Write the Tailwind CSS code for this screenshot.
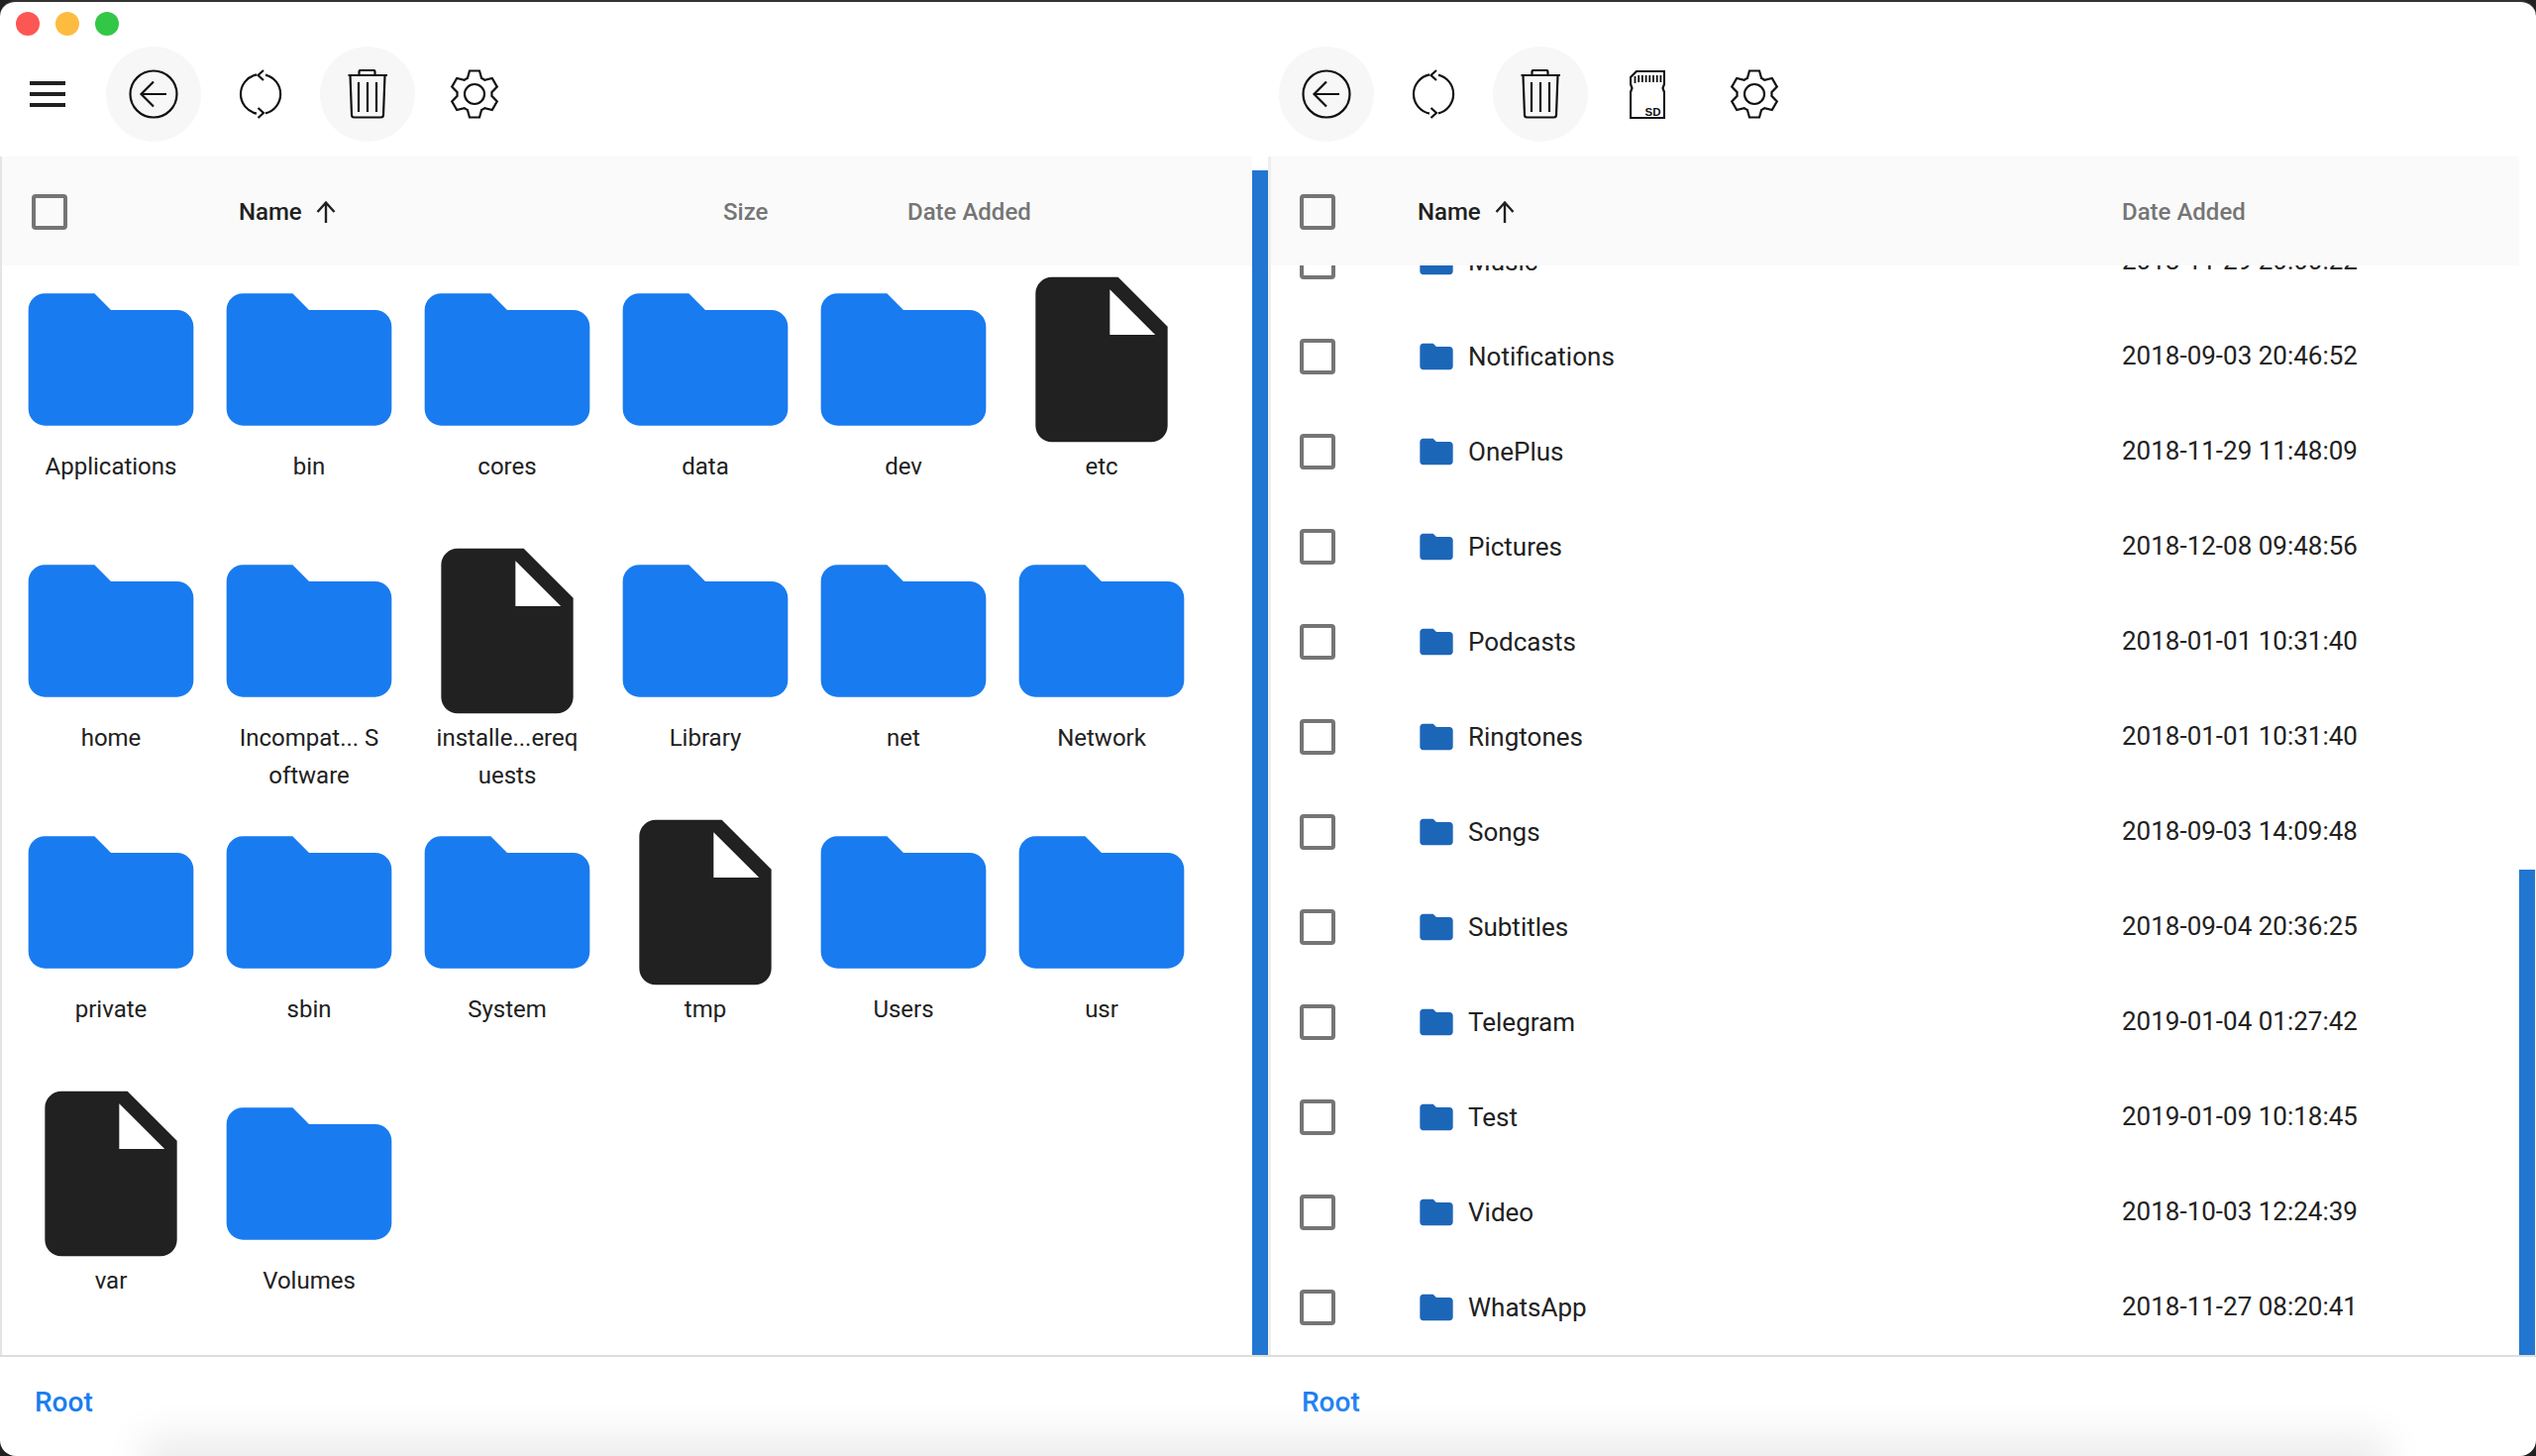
<!DOCTYPE html>
<html lang="en">
<head>
  <meta charset="UTF-8" />
  <title>File Explorer</title>
  <script src="https://cdn.jsdelivr.net/npm/@tailwindcss/browser@4"></script>
</head>
<body class="h-[1470px] overflow-hidden bg-[#222222] font-['Roboto',sans-serif] text-[#212121]">
  <svg class="hidden">
    <symbol id="folder" viewBox="0 0 24 24"><path fill="currentColor" d="M10 4H4c-1.1 0-2 .9-2 2v12c0 1.1.9 2 2 2h16c1.1 0 2-.9 2-2V8c0-1.1-.9-2-2-2h-8l-2-2z"/></symbol>
    <symbol id="file" viewBox="0 0 24 24"><path fill="currentColor" d="M6 2c-1.1 0-2 .9-2 2v16c0 1.1.9 2 2 2h12c1.1 0 2-.9 2-2V8l-6-6H6zm7 7V3.500L18.500 9H13z"/></symbol>
    <symbol id="up" viewBox="-12 -12 24 24"><path fill="none" stroke="currentColor" stroke-width="2.400" d="M0 11V-9M-8.500 0L0 -9.500L8.500 0"/></symbol>
    <symbol id="back" viewBox="-25 -25 50 50"><g fill="none" stroke="#111" stroke-width="2.200"><circle r="23.500"/><path d="M13 0H-12.500M0 -12.500L-12.500 0L0 12.500"/></g></symbol>
    <symbol id="refresh" viewBox="-25 -25 50 50"><g fill="none" stroke="#111" stroke-width="2.200"><path d="M-4 -19.600A20 20 0 0 0 -4 19.600M5 -19.400A20 20 0 0 1 5 19.400M3 -24L-2.500 -19L3 -14M-2.500 24L3 19L-2.500 14"/></g></symbol>
    <symbol id="trash" viewBox="-25 -25 50 50"><g fill="none" stroke="#111" stroke-width="2.200"><path d="M-19.500 -19H20M-8.500 -19V-22.500Q-8.500 -24 -7 -24H6Q7.500 -24 7.500 -22.500V-19M-17.500 -19L-16 21Q-16 23.500 -13.500 23.500H13.500Q16 23.500 16 21L17.500 -19M-9 -12V18M0 -12V18M9 -12V18"/></g></symbol>
    <symbol id="gear" viewBox="-25 -25 50 50"><g fill="none" stroke="#111" stroke-width="2.200"><circle r="10"/><path d="M-7.100 -16L-5 -23.500H5L7.100 -16A17.500 17.500 0 0 1 10.300 -14.200L17.800 -16.100L22.800 -7.400L17.400 -1.800A17.500 17.500 0 0 1 17.400 1.800L22.800 7.400L17.800 16.100L10.300 14.200A17.500 17.500 0 0 1 7.100 16L5 23.500H-5L-7.100 16A17.500 17.500 0 0 1 -10.300 14.200L-17.800 16.100L-22.800 7.400L-17.400 1.800A17.500 17.500 0 0 1 -17.400 -1.800L-22.800 -7.400L-17.800 -16.100L-10.300 -14.200A17.500 17.500 0 0 1 -7.100 -16Z"/></g></symbol>
  </svg>

  <div class="relative w-[2560px] h-[1470px] bg-white overflow-hidden rounded-[16px] border-t-2 border-[#333333]">
    <!-- window buttons -->
    <div class="flex gap-4 pl-4 pt-[10px] h-[44px]">
      <div class="w-6 h-6 rounded-full bg-[#fc5753]"></div>
      <div class="w-6 h-6 rounded-full bg-[#fdbc40]"></div>
      <div class="w-6 h-6 rounded-full bg-[#33c748]"></div>
    </div>

    <!-- toolbars -->
    <div class="flex h-[112px] pt-px">
      <div class="flex w-[1281px] pl-[30px]">
        <div class="flex flex-col justify-center gap-[7px] w-9 h-24 mr-[41px]">
          <div class="h-1 bg-[#212121]"></div>
          <div class="h-1 bg-[#212121]"></div>
          <div class="h-1 bg-[#212121]"></div>
        </div>
        <div class="flex gap-3">
          <div class="flex items-center justify-center w-24 h-24 rounded-full bg-[#f7f7f7]"><svg class="w-[50px] h-[50px]"><use href="#back"/></svg></div>
          <div class="flex items-center justify-center w-24 h-24 rounded-full"><svg class="w-[50px] h-[50px]"><use href="#refresh"/></svg></div>
          <div class="flex items-center justify-center w-24 h-24 rounded-full bg-[#f7f7f7]"><svg class="w-[50px] h-[50px]"><use href="#trash"/></svg></div>
          <div class="flex items-center justify-center w-24 h-24 rounded-full"><svg class="w-[50px] h-[50px]"><use href="#gear"/></svg></div>
        </div>
      </div>
      <div class="flex gap-3 pl-[10px]">
        <div class="flex items-center justify-center w-24 h-24 rounded-full bg-[#f7f7f7]"><svg class="w-[50px] h-[50px]"><use href="#back"/></svg></div>
        <div class="flex items-center justify-center w-24 h-24 rounded-full"><svg class="w-[50px] h-[50px]"><use href="#refresh"/></svg></div>
        <div class="flex items-center justify-center w-24 h-24 rounded-full bg-[#f7f7f7]"><svg class="w-[50px] h-[50px]"><use href="#trash"/></svg></div>
        <div class="flex items-center justify-center w-24 h-24 rounded-full">
          <svg class="w-9 h-[49px]" viewBox="0 0 36 49"><path fill="none" stroke="#111" stroke-width="2.200" d="M7 1H35V14L33.500 18L35 22V48H1V22L2.500 18L1 14V7Z"/><path stroke="#111" stroke-width="1.800" d="M5.500 6V13M9.200 5V12M12.900 5V12M16.600 5V12M20.300 5V12M24 5V12M27.700 5V12M31.400 5V12"/><text x="15.500" y="45.500" font-family="Liberation Sans" font-weight="700" font-size="11.500" fill="#111">SD</text></svg>
        </div>
        <div class="flex items-center justify-center w-24 h-24 rounded-full"><svg class="w-[50px] h-[50px]"><use href="#gear"/></svg></div>
      </div>
    </div>

    <div class="flex h-[1210px]">
      <!-- left panel, icon view -->
      <div class="flex flex-col w-[1264px] border-l-2 border-[#e4e4e4]">
        <div class="flex items-center h-[110px] pt-[2px] shrink-0 bg-[#fafafa] text-[24px] font-medium">
          <div class="w-[239px] pl-[30px]"><div class="w-9 h-9 border-4 border-[#757575] rounded-[4px]"></div></div>
          <div class="flex items-center gap-[12px] w-[489px]">Name <svg class="w-6 h-6"><use href="#up"/></svg></div>
          <div class="w-[186px] text-[#757575]">Size</div>
          <div class="text-[#757575]">Date Added</div>
        </div>
        <div class="grid grid-cols-[repeat(6,200px)] auto-rows-[274px] pl-[10px] -mt-[5px] overflow-hidden text-[24px] leading-[38px] text-center">
          <div class="flex flex-col items-center"><svg class="w-[200px] h-[200px] shrink-0 text-[#197bf0]"><use href="#folder"/></svg><div class="w-[150px] -mt-[11px] break-all">Applications</div></div>
          <div class="flex flex-col items-center"><svg class="w-[200px] h-[200px] shrink-0 text-[#197bf0]"><use href="#folder"/></svg><div class="w-[150px] -mt-[11px] break-all">bin</div></div>
          <div class="flex flex-col items-center"><svg class="w-[200px] h-[200px] shrink-0 text-[#197bf0]"><use href="#folder"/></svg><div class="w-[150px] -mt-[11px] break-all">cores</div></div>
          <div class="flex flex-col items-center"><svg class="w-[200px] h-[200px] shrink-0 text-[#197bf0]"><use href="#folder"/></svg><div class="w-[150px] -mt-[11px] break-all">data</div></div>
          <div class="flex flex-col items-center"><svg class="w-[200px] h-[200px] shrink-0 text-[#197bf0]"><use href="#folder"/></svg><div class="w-[150px] -mt-[11px] break-all">dev</div></div>
          <div class="flex flex-col items-center"><svg class="w-[200px] h-[200px] shrink-0 text-[#212121]"><use href="#file"/></svg><div class="w-[150px] -mt-[11px] break-all">etc</div></div>
          <div class="flex flex-col items-center"><svg class="w-[200px] h-[200px] shrink-0 text-[#197bf0]"><use href="#folder"/></svg><div class="w-[150px] -mt-[11px] break-all">home</div></div>
          <div class="flex flex-col items-center"><svg class="w-[200px] h-[200px] shrink-0 text-[#197bf0]"><use href="#folder"/></svg><div class="w-[150px] -mt-[11px] break-all">Incompat... Software</div></div>
          <div class="flex flex-col items-center"><svg class="w-[200px] h-[200px] shrink-0 text-[#212121]"><use href="#file"/></svg><div class="w-[150px] -mt-[11px] break-all">installe...erequests</div></div>
          <div class="flex flex-col items-center"><svg class="w-[200px] h-[200px] shrink-0 text-[#197bf0]"><use href="#folder"/></svg><div class="w-[150px] -mt-[11px] break-all">Library</div></div>
          <div class="flex flex-col items-center"><svg class="w-[200px] h-[200px] shrink-0 text-[#197bf0]"><use href="#folder"/></svg><div class="w-[150px] -mt-[11px] break-all">net</div></div>
          <div class="flex flex-col items-center"><svg class="w-[200px] h-[200px] shrink-0 text-[#197bf0]"><use href="#folder"/></svg><div class="w-[150px] -mt-[11px] break-all">Network</div></div>
          <div class="flex flex-col items-center"><svg class="w-[200px] h-[200px] shrink-0 text-[#197bf0]"><use href="#folder"/></svg><div class="w-[150px] -mt-[11px] break-all">private</div></div>
          <div class="flex flex-col items-center"><svg class="w-[200px] h-[200px] shrink-0 text-[#197bf0]"><use href="#folder"/></svg><div class="w-[150px] -mt-[11px] break-all">sbin</div></div>
          <div class="flex flex-col items-center"><svg class="w-[200px] h-[200px] shrink-0 text-[#197bf0]"><use href="#folder"/></svg><div class="w-[150px] -mt-[11px] break-all">System</div></div>
          <div class="flex flex-col items-center"><svg class="w-[200px] h-[200px] shrink-0 text-[#212121]"><use href="#file"/></svg><div class="w-[150px] -mt-[11px] break-all">tmp</div></div>
          <div class="flex flex-col items-center"><svg class="w-[200px] h-[200px] shrink-0 text-[#197bf0]"><use href="#folder"/></svg><div class="w-[150px] -mt-[11px] break-all">Users</div></div>
          <div class="flex flex-col items-center"><svg class="w-[200px] h-[200px] shrink-0 text-[#197bf0]"><use href="#folder"/></svg><div class="w-[150px] -mt-[11px] break-all">usr</div></div>
          <div class="flex flex-col items-center"><svg class="w-[200px] h-[200px] shrink-0 text-[#212121]"><use href="#file"/></svg><div class="w-[150px] -mt-[11px] break-all">var</div></div>
          <div class="flex flex-col items-center"><svg class="w-[200px] h-[200px] shrink-0 text-[#197bf0]"><use href="#folder"/></svg><div class="w-[150px] -mt-[11px] break-all">Volumes</div></div>
        </div>
      </div>
      <div class="w-4 mt-[14px] bg-[#2176d2]"></div>

      <!-- right panel, list view -->
      <div class="flex flex-col w-[1263px] border-l-[3px] border-[#eeeeee]">
        <div class="relative z-10 flex items-center h-[110px] pt-[2px] shrink-0 bg-[#fafafa] text-[24px] font-medium">
          <div class="w-[148px] pl-[29px]"><div class="w-9 h-9 border-4 border-[#757575] rounded-[4px]"></div></div>
          <div class="flex items-center gap-[12px] w-[711px]">Name <svg class="w-6 h-6"><use href="#up"/></svg></div>
          <div class="text-[#757575]">Date Added</div>
        </div>
        <div class="-mt-[52px] overflow-hidden text-[26px]">
          <div class="flex items-center h-24"><div class="w-[147px] pl-[29px]"><div class="w-9 h-9 border-4 border-[#757575] rounded-[4px]"></div></div><svg class="w-10 h-10 text-[#1c66b8]"><use href="#folder"/></svg><div class="w-[672px] pl-[12px]">Music</div><div class="-mt-[2px]">2018-11-29 20:00:22</div></div>
          <div class="flex items-center h-24"><div class="w-[147px] pl-[29px]"><div class="w-9 h-9 border-4 border-[#757575] rounded-[4px]"></div></div><svg class="w-10 h-10 text-[#1c66b8]"><use href="#folder"/></svg><div class="w-[672px] pl-[12px]">Notifications</div><div class="-mt-[2px]">2018-09-03 20:46:52</div></div>
          <div class="flex items-center h-24"><div class="w-[147px] pl-[29px]"><div class="w-9 h-9 border-4 border-[#757575] rounded-[4px]"></div></div><svg class="w-10 h-10 text-[#1c66b8]"><use href="#folder"/></svg><div class="w-[672px] pl-[12px]">OnePlus</div><div class="-mt-[2px]">2018-11-29 11:48:09</div></div>
          <div class="flex items-center h-24"><div class="w-[147px] pl-[29px]"><div class="w-9 h-9 border-4 border-[#757575] rounded-[4px]"></div></div><svg class="w-10 h-10 text-[#1c66b8]"><use href="#folder"/></svg><div class="w-[672px] pl-[12px]">Pictures</div><div class="-mt-[2px]">2018-12-08 09:48:56</div></div>
          <div class="flex items-center h-24"><div class="w-[147px] pl-[29px]"><div class="w-9 h-9 border-4 border-[#757575] rounded-[4px]"></div></div><svg class="w-10 h-10 text-[#1c66b8]"><use href="#folder"/></svg><div class="w-[672px] pl-[12px]">Podcasts</div><div class="-mt-[2px]">2018-01-01 10:31:40</div></div>
          <div class="flex items-center h-24"><div class="w-[147px] pl-[29px]"><div class="w-9 h-9 border-4 border-[#757575] rounded-[4px]"></div></div><svg class="w-10 h-10 text-[#1c66b8]"><use href="#folder"/></svg><div class="w-[672px] pl-[12px]">Ringtones</div><div class="-mt-[2px]">2018-01-01 10:31:40</div></div>
          <div class="flex items-center h-24"><div class="w-[147px] pl-[29px]"><div class="w-9 h-9 border-4 border-[#757575] rounded-[4px]"></div></div><svg class="w-10 h-10 text-[#1c66b8]"><use href="#folder"/></svg><div class="w-[672px] pl-[12px]">Songs</div><div class="-mt-[2px]">2018-09-03 14:09:48</div></div>
          <div class="flex items-center h-24"><div class="w-[147px] pl-[29px]"><div class="w-9 h-9 border-4 border-[#757575] rounded-[4px]"></div></div><svg class="w-10 h-10 text-[#1c66b8]"><use href="#folder"/></svg><div class="w-[672px] pl-[12px]">Subtitles</div><div class="-mt-[2px]">2018-09-04 20:36:25</div></div>
          <div class="flex items-center h-24"><div class="w-[147px] pl-[29px]"><div class="w-9 h-9 border-4 border-[#757575] rounded-[4px]"></div></div><svg class="w-10 h-10 text-[#1c66b8]"><use href="#folder"/></svg><div class="w-[672px] pl-[12px]">Telegram</div><div class="-mt-[2px]">2019-01-04 01:27:42</div></div>
          <div class="flex items-center h-24"><div class="w-[147px] pl-[29px]"><div class="w-9 h-9 border-4 border-[#757575] rounded-[4px]"></div></div><svg class="w-10 h-10 text-[#1c66b8]"><use href="#folder"/></svg><div class="w-[672px] pl-[12px]">Test</div><div class="-mt-[2px]">2019-01-09 10:18:45</div></div>
          <div class="flex items-center h-24"><div class="w-[147px] pl-[29px]"><div class="w-9 h-9 border-4 border-[#757575] rounded-[4px]"></div></div><svg class="w-10 h-10 text-[#1c66b8]"><use href="#folder"/></svg><div class="w-[672px] pl-[12px]">Video</div><div class="-mt-[2px]">2018-10-03 12:24:39</div></div>
          <div class="flex items-center h-24"><div class="w-[147px] pl-[29px]"><div class="w-9 h-9 border-4 border-[#757575] rounded-[4px]"></div></div><svg class="w-10 h-10 text-[#1c66b8]"><use href="#folder"/></svg><div class="w-[672px] pl-[12px]">WhatsApp</div><div class="-mt-[2px]">2018-11-27 08:20:41</div></div>
        </div>
      </div>
      <div class="w-4 mt-[720px] bg-[#2176d2]"></div>
    </div>

    <!-- breadcrumbs -->
    <div class="flex items-center h-[100px] pb-[6px] border-t-2 border-[#dddddd] text-[28px] font-medium text-[#1a7df0]">
      <div class="w-[1281px] pl-[35px]">Root</div>
      <div class="pl-[33px]">Root</div>
    </div>
    <div class="absolute left-[165px] right-[170px] -bottom-5 h-5 shadow-[0_0_40px_20px_#ececec]"></div>
  </div>
</body>
</html>
